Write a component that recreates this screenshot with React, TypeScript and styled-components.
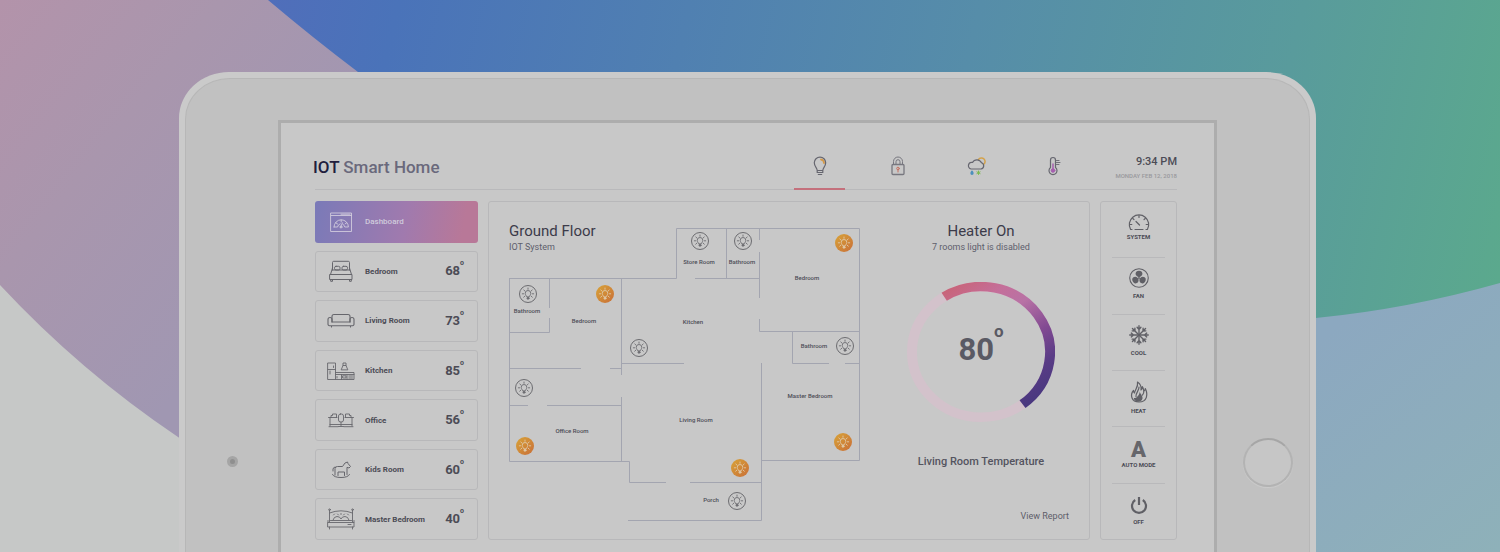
import React from "react";
import styled, { createGlobalStyle, css } from "styled-components";

const GlobalStyle = createGlobalStyle`
  *, *::before, *::after { box-sizing: border-box; }
  body {
    margin: 0;
    background: #c6c8c7;
    color: #4c4c56;
    font-family: Roboto, "Liberation Sans", sans-serif;
  }
  h1, h2, p { margin: 0; }
  button {
    font: inherit;
    color: inherit;
    background: none;
    border: 0;
    padding: 0;
    cursor: pointer;
  }
`;

const Page = styled.div`
  position: relative;
  min-height: 100vh;
  padding: 72px 184px 0 179px;
  display: flex;
  flex-direction: column;
  overflow: hidden;
`;

const Backdrop = styled.svg`
  position: absolute;
  inset: 0;
  width: 100%;
  height: 100%;
`;

const Tablet = styled.div`
  position: relative;
  flex: 1;
  display: flex;
  padding: 6px 6px 0;
  background: #cacaca;
  border-radius: 50px 50px 0 0 / 46px 46px 0 0;
`;

const Bezel = styled.div`
  flex: 1;
  display: grid;
  grid-template-columns: 92px 1fr 92px;
  padding-top: 41px;
  background: #c1c1c1;
  border: solid #b7b7b7;
  border-width: 1px 1px 0;
  border-radius: 45px 45px 0 0 / 41px 41px 0 0;
`;

const BezelSide = styled.div<{ $inset?: number }>`
  display: flex;
  justify-content: center;
  align-items: flex-start;
  padding-left: ${(p) => p.$inset ?? 0}px;
`;

const Camera = styled.span`
  width: 11px;
  height: 11px;
  margin-top: 336px;
  border: 3px solid #a5a5a5;
  border-radius: 50%;
  background: #8f8f8f;
`;

const HomeButton = styled.button`
  width: 50px;
  height: 49px;
  margin-top: 318px;
  border: 2px solid #b3b3b3;
  border-top-color: #a6a6a6;
  border-radius: 50%;
  background: #c6c6c6;
  box-shadow: 0 1px 1px #cccccc;
`;

const Screen = styled.main`
  padding: 32px 37px 12px 34px;
  background: #c8c8c8;
  border: solid #adadad;
  border-width: 3px 3px 0;
`;

const Header = styled.header`
  display: flex;
  height: 35px;
  border-bottom: 1px solid #b9b9bb;
`;

const Title = styled.h1`
  flex: 1;
  margin-left: -2px;
  font-size: 17px;
  line-height: 25px;
  font-weight: 500;
  color: #6a697c;
  strong { font-weight: 500; color: #211d3d; }
`;

const Tabs = styled.nav`
  display: flex;
  gap: 27px;
`;

const Tab = styled.button<{ $active?: boolean }>`
  width: 51px;
  height: 35px;
  padding-bottom: 11px;
  display: flex;
  align-items: center;
  justify-content: center;
  border-bottom: 2px solid ${(p) => (p.$active ? "#c4707c" : "transparent")};
`;

const Clock = styled.div`
  width: 98px;
  text-align: right;
`;

const Time = styled.div`
  font-size: 11px;
  line-height: 14px;
  font-weight: 500;
`;

const DateLine = styled.div`
  font-size: 6px;
  line-height: 14px;
  font-weight: 500;
  color: #98989c;
`;

const Content = styled.div`
  display: grid;
  grid-template-columns: 163px 1fr 77px;
  column-gap: 10px;
  margin-top: 11px;
`;

const box = css`
  border: 1px solid #b8b8ba;
  border-radius: 3px;
`;

const Sidebar = styled.nav`
  display: flex;
  flex-direction: column;
  gap: 8px;
`;

const RoomButton = styled.button<{ $active?: boolean }>`
  ${box}
  flex: 1;
  display: grid;
  grid-template-columns: 28px 1fr auto;
  column-gap: 10px;
  align-items: center;
  padding: 0 13px 0 11px;
  text-align: left;
  font-size: 8px;
  font-weight: 700;
  svg { color: #66666c; }
  ${(p) =>
    p.$active &&
    css`
      border-color: transparent;
      background: linear-gradient(100deg, #7a7ab8, #a07aae 55%, #b87898 90%) border-box;
      color: #d0cbdc;
      font-weight: 500;
      svg { color: #d0cbdc; }
    `}
`;

const RoomTemp = styled.span`
  display: flex;
  align-items: flex-start;
  font-size: 13px;
  line-height: 16px;
  font-weight: 700;
  sup {
    font-size: 7px;
    line-height: 1px;
    vertical-align: baseline;
  }
`;

const Panel = styled.section`
  ${box}
  display: flex;
  gap: 30px;
  min-height: 339px;
  padding: 20px 20px 0 20px;
`;

const FloorArea = styled.div`
  flex: none;
  width: 354px;
  display: grid;
  align-items: start;
  > * { grid-area: 1 / 1; }
`;

const PanelTitle = styled.h2`
  font-size: 15px;
  line-height: 18px;
  font-weight: 400;
  color: #3c3b4a;
`;

const PanelNote = styled.p`
  font-size: 9px;
  line-height: 14px;
  color: #5e5e6c;
`;

const Plan = styled.div`
  position: relative;
  width: 354px;
  height: 294px;
  margin-top: 6px;
`;

const RoomLabel = styled.span<{ $x: number; $y: number }>`
  position: absolute;
  left: ${(p) => p.$x}px;
  top: ${(p) => p.$y}px;
  transform: translate(-50%, -50%);
  font-size: 6px;
  line-height: 8px;
  font-weight: 500;
  white-space: nowrap;
`;

const LightButton = styled.button<{ $x: number; $y: number; $on: boolean }>`
  position: absolute;
  left: ${(p) => p.$x - 9}px;
  top: ${(p) => p.$y - 9}px;
  width: 18px;
  height: 18px;
  display: flex;
  align-items: center;
  justify-content: center;
  border-radius: 50%;
  border: 1px solid ${(p) => (p.$on ? "transparent" : "#6c6c70")};
  color: ${(p) => (p.$on ? "#dfc9a9" : "#6c6c70")};
  background: ${(p) => (p.$on ? "linear-gradient(135deg, #d8a338, #c96f38) border-box" : "none")};
`;

const Heater = styled.div`
  flex: 1;
  display: flex;
  flex-direction: column;
  align-items: center;
`;

const Dial = styled.div`
  display: grid;
  place-items: center;
  margin-top: 28px;
  > * { grid-area: 1 / 1; }
`;

const DialValue = styled.div`
  display: flex;
  padding-bottom: 5px;
  font-size: 31px;
  line-height: 36px;
  font-weight: 700;
  color: #5a5a64;
  sup {
    margin-top: -2px;
    font-size: 17px;
    line-height: 3px;
    vertical-align: baseline;
  }
`;

const DialCaption = styled.p`
  margin-top: 32px;
  font-size: 11px;
  line-height: 16px;
  font-weight: 500;
  color: #54545f;
`;

const ReportLink = styled.a`
  align-self: flex-end;
  margin-top: 40px;
  font-size: 9px;
  line-height: 12px;
  color: #5e5e6a;
  text-decoration: none;
`;

const Modes = styled.aside`
  ${box}
  display: flex;
  flex-direction: column;
  padding: 0 11px;
`;

const ModeButton = styled.button<{ $tight?: boolean }>`
  flex: 1;
  padding-top: 10px;
  display: flex;
  flex-direction: column;
  align-items: center;
  gap: ${(p) => (p.$tight ? 1 : 4)}px;
  font-size: 6px;
  line-height: 8px;
  font-weight: 700;
  white-space: nowrap;
  & + & { border-top: 1px solid #b9b9bb; }
  svg { display: block; color: #606066; }
`;

const AutoGlyph = styled.span`
  height: 20px;
  font-size: 22px;
  line-height: 26px;
  font-weight: 900;
  color: #66666b;
`;

type IconProps = { w: number; h: number; vb?: string; sw?: number; children: React.ReactNode };

const Icon = ({ w, h, vb, sw = 1, children }: IconProps) => (
  <svg
    width={w}
    height={h}
    viewBox={vb ?? `0 0 ${w} ${h}`}
    fill="none"
    stroke="currentColor"
    strokeWidth={sw}
    strokeLinecap="round"
    strokeLinejoin="round"
    aria-hidden="true"
  >
    {children}
  </svg>
);

const DashboardIcon = () => (
  <Icon w={28} h={22} sw={0.9}>
    <path d="M4 2H24.500V20.500H4ZM4 4.500H24.500M14 3.200H23" />
    <path d="M7 16a7 7 0 0 1 14.400 0h-3.600a3.800 3.800 0 0 0-2-2.800M7 16h3.600a3.800 3.800 0 0 1 2.600-3.200M8.800 11.800l1.800 1.200M14.200 9v2M19.600 11.800l-1.500 1.100" />
    <path d="M13.500 16.300l2-4.500" />
    <circle cx="14" cy="16" r="1" />
  </Icon>
);

const BedIcon = () => (
  <Icon w={28} h={22}>
    <path d="M5.500 10V2.500A1.200 1.200 0 0 1 6.700 1.300H21.300A1.200 1.200 0 0 1 22.500 2.500V10M5.500 8L3.500 14.500M22.500 8L24.500 14.500" />
    <path d="M3 14.500H25V19.500H3ZM3.700 19.500V21.300H5.500V19.500M22.500 19.500V21.300H24.300V19.500M5.500 10H22.500" />
    <rect x="7.500" y="6.300" width="5.500" height="3.700" rx="1.500" />
    <rect x="15" y="6.300" width="5.500" height="3.700" rx="1.500" />
  </Icon>
);

const SofaIcon = () => (
  <Icon w={28} h={22} sw={1.100}>
    <path d="M5 8V6.500A2 2 0 0 1 7 4.500H21A2 2 0 0 1 23 6.500V8M5 8.500V12H23V8.500" />
    <path d="M5 12V9.500A2 2 0 0 0 1 9.500V14A1.500 1.500 0 0 0 2.500 15.700H25.500A1.500 1.500 0 0 0 27 14V9.500A2 2 0 0 0 23 9.500V12M4.500 15.700V17M23.500 15.700V17" />
  </Icon>
);

const KitchenIcon = () => (
  <Icon w={28} h={22} sw={0.9}>
    <path d="M1 3H8.500V19.500H1ZM1 9.500H8.500M6.500 6V7.500M3 11V14M8.500 12.500H27V19.500H8.500M8.500 14.500H27M14.500 14.500V19.500M20 14.500V19.500" />
    <path d="M14.300 9.500L16 5.500H19L20.700 9.500ZM16 5.500V3H19V5.500" />
    <rect x="16" y="15.800" width="3" height="2.200" />
    <path d="M21.800 16H25.500M21.800 18H25.500M10 16.500V18" />
  </Icon>
);

const OfficeIcon = () => (
  <Icon w={28} h={22} sw={0.9}>
    <path d="M1.500 8.500H10M18 8.500H26.500M3 8.500V17M25 8.500V17M2 17.700H11M17 17.700H26M3 15.500H25" />
    <path d="M4 8.500V6.500H5.500V5H9.500V8.500M24 8.500V6.500H22.500V5H18.500V8.500" />
    <rect x="11.500" y="5" width="5" height="8" rx="2" />
    <path d="M14 13V17M11.500 17.500H16.500" />
  </Icon>
);

const HorseIcon = () => (
  <Icon w={28} h={22}>
    <path d="M8 16V9.500A2.500 2.500 0 0 1 10.500 7.500H15.500L18 4L20.500 3L21 4.500L23.500 7.500L22 9L20 8.300V15.500M6 12V10A2.500 2.500 0 0 1 8 8" />
    <path d="M11 16.500V13H17.500V16.500" />
    <path d="M5.500 15.500Q7 18.500 14 18.500Q21 18.500 22.500 15.500" />
  </Icon>
);

const MasterBedIcon = () => (
  <Icon w={28} h={22} sw={0.9}>
    <path d="M2.500 14V2.500M25.500 14V2.500M2.500 5Q14 .5 25.500 5" />
    <circle cx="2.500" cy="1.700" r=".8" />
    <circle cx="25.500" cy="1.700" r=".8" />
    <path d="M1 14.500H27V19H1ZM2.500 19V21M25.500 19V21M3.500 12.500H24.500M21 16.500H24M1 12.500V14.500M27 12.500V14.500" />
    <path d="M6 12Q7 8.500 10 8.500Q13 8.500 14 11Q15 8.500 18 8.500Q21 8.500 22 12" />
    <path d="M6.500 7L7.500 6M10.500 6L11.500 7M14 5.500V6.500M16.500 7L17.500 6M20.500 6L21.500 7" />
  </Icon>
);

const BulbIcon = () => (
  <Icon w={16} h={20}>
    <path d="M9 3.500A3.500 3.500 0 0 1 12 7" stroke="#d49a4a" strokeWidth={1.800} />
    <path d="M5.200 14.500C5.200 12 2.300 10.500 2.300 6.800A5.700 5.700 0 0 1 13.700 6.800C13.700 10.500 10.800 12 10.800 14.500ZM5.200 14.500V16.500H10.800V14.500M6.300 18.500H9.700" stroke="#66666f" strokeWidth={1.200} />
  </Icon>
);

const LockIcon = () => (
  <Icon w={16} h={20}>
    <rect x="2" y="8.500" width="12" height="10" rx="1" stroke="#77777f" strokeWidth={1.300} />
    <path d="M3.500 8.500V5.500A4.500 4.500 0 0 1 12.500 5.500V8.500M6 8.500V5.700A2 2 0 0 1 10 5.700V8.500" stroke="#77777f" />
    <circle cx="8" cy="12.500" r="1.300" stroke="#c47060" />
    <path d="M8 14V16" stroke="#c47060" />
  </Icon>
);

const WeatherIcon = () => (
  <Icon w={20} h={20}>
    <path d="M12.500 3.500A3.600 3.600 0 1 1 17.500 8.500" stroke="#d4a24a" strokeWidth={1.500} />
    <path d="M5 13H15A3.200 3.200 0 0 0 15.500 6.800A5 5 0 0 0 6.500 6.500A3.300 3.300 0 1 0 5 13Z" stroke="#66666f" strokeWidth={1.200} />
    <path d="M6 15.500C5 17 5 18 6 18S7 17 6 15.500Z" stroke="#4d90bd" strokeWidth={1.800} />
    <path d="M12.500 15V18.500M10.900 15.900L14.100 17.600M14.100 15.900L10.900 17.600" stroke="#7dba4f" />
  </Icon>
);

const ThermoIcon = () => (
  <Icon w={16} h={20}>
    <path d="M4.500 11.500V4A2.500 2.500 0 0 1 9.500 4V11.500A4 4 0 1 1 4.500 11.500Z" stroke="#66666f" strokeWidth={1.200} />
    <circle cx="7" cy="14.500" r="1.800" fill="#a55fae" stroke="#a55fae" />
    <path d="M7 8V13" stroke="#a55fae" strokeWidth={1.500} />
    <path d="M10.500 4.500H13M10.500 6.500H14M10.500 8.500H13" stroke="#66666f" strokeWidth={0.9} />
  </Icon>
);

const LightIcon = () => (
  <Icon w={14} h={14} sw={0.9}>
    <path d="M5.700 9.500C5.500 8.700 4.200 8 4.200 6.300A2.800 2.800 0 0 1 9.800 6.300C9.800 8 8.500 8.700 8.300 9.500Z" />
    <path d="M7 1V2.300M2.800 3L3.800 3.900M11.200 3L10.200 3.900M1.300 6.800H2.600M12.700 6.800H11.400M2.700 10.200L3.800 9.200M11.300 10.200L10.200 9.200" />
    <circle cx="7" cy="11.300" r="1" fill="currentColor" />
  </Icon>
);

const GaugeIcon = () => (
  <Icon w={22} h={20} sw={1.200}>
    <path d="M4 17.500H2.600A9.700 9.700 0 1 1 19.400 17.500H18M7 17.500H15" />
    <path d="M11 3.500V5.500M4.800 6.500L6 7.700M17.200 6.500L16 7.700M1.800 12.500H3.800M20.200 12.500H18.200M8 9.500L11.500 13" />
  </Icon>
);

const FanIcon = () => (
  <Icon w={22} h={20} vb="0 0 22 22" sw={1.200}>
    <circle cx="11" cy="11" r="10.200" />
    <g fill="currentColor" stroke="none">
      <path id="blade" d="M10.300 9.900C7.300 9 6.500 6 8 4.200C9.500 2.800 12.500 2.800 14 4.200C15.500 6 14.700 9 11.700 9.900Z" />
      <use href="#blade" transform="rotate(120 11 11)" />
      <use href="#blade" transform="rotate(240 11 11)" />
      <circle cx="11" cy="11" r="1" />
    </g>
  </Icon>
);

const SnowIcon = () => (
  <Icon w={22} h={20} vb="0 0 22 22" sw={1.500}>
    {[0, 45, 90, 135, 180, 225, 270, 315].map((a) => (
      <path key={a} d="M11 11V.8M8.900 2.500L11 4.900L13.100 2.500" transform={`rotate(${a} 11 11)`} />
    ))}
  </Icon>
);

const FlameIcon = () => (
  <Icon w={20} h={22} vb="0 0 20 22" sw={1.200}>
    <path d="M8.500 1C12 3.500 12.500 6.500 12 9C13 8.500 13.500 7 13.300 5.500C14.500 7 14.800 8.500 14.800 10C16 9.500 16.300 8.500 16.300 7.500C19 13 18.500 21 10 21C2 21 1 13.500 4.500 9.500C4.500 10.500 4.800 11.500 5.500 12C6 8.500 9.500 6 8.500 1Z" />
    <path d="M10 6C10.300 9.500 6.500 12 7 15.500M14.800 10C15 12 14.500 13 13.500 14" />
    <path d="M10.800 10.500C11 13 14 14.500 13.500 17.500C13 20 11 20.700 9 20.700C6.500 20.500 5 19 4.800 17C6 17.300 7 17 7.700 16.300C9.500 14.800 10.500 13 10.800 10.500Z" fill="currentColor" stroke="none" />
  </Icon>
);

const PowerIcon = () => (
  <Icon w={20} h={20} vb="0 -2 20 20" sw={2.200}>
    <path d="M6.200 4A7 7 0 1 0 13.800 4M10 1V9" strokeLinecap="butt" />
  </Icon>
);

const rooms = [
  { name: "Bedroom", temp: 68, icon: <BedIcon /> },
  { name: "Living Room", temp: 73, icon: <SofaIcon /> },
  { name: "Kitchen", temp: 85, icon: <KitchenIcon /> },
  { name: "Office", temp: 56, icon: <OfficeIcon /> },
  { name: "Kids Room", temp: 60, icon: <HorseIcon /> },
  { name: "Master Bedroom", temp: 40, icon: <MasterBedIcon /> },
];

const tabs = [
  { name: "Lights", icon: <BulbIcon /> },
  { name: "Security", icon: <LockIcon /> },
  { name: "Weather", icon: <WeatherIcon /> },
  { name: "Temperature", icon: <ThermoIcon /> },
];

const modes = [
  { name: "SYSTEM", icon: <GaugeIcon />, tight: true },
  { name: "FAN", icon: <FanIcon /> },
  { name: "COOL", icon: <SnowIcon /> },
  { name: "HEAT", icon: <FlameIcon /> },
  { name: "AUTO MODE", icon: <AutoGlyph aria-hidden="true">A</AutoGlyph> },
  { name: "OFF", icon: <PowerIcon /> },
];

const planLabels = [
  { name: "Store Room", x: 190, y: 34 },
  { name: "Bathroom", x: 233, y: 34 },
  { name: "Bedroom", x: 298, y: 50 },
  { name: "Bathroom", x: 18, y: 83 },
  { name: "Bedroom", x: 75, y: 93 },
  { name: "Kitchen", x: 184, y: 94 },
  { name: "Bathroom", x: 305, y: 118 },
  { name: "Master Bedroom", x: 301, y: 168 },
  { name: "Living Room", x: 187, y: 192 },
  { name: "Office Room", x: 63, y: 203 },
  { name: "Porch", x: 202, y: 272 },
];

const lights = [
  { room: "Store room", x: 191, y: 13, on: false },
  { room: "Small bathroom", x: 234, y: 13, on: false },
  { room: "Upper bedroom", x: 335, y: 15, on: true },
  { room: "Left bathroom", x: 19, y: 66, on: false },
  { room: "Left bedroom", x: 96, y: 66, on: true },
  { room: "Kitchen", x: 130, y: 120, on: false },
  { room: "Right bathroom", x: 336, y: 118, on: false },
  { room: "Hall", x: 15, y: 160, on: false },
  { room: "Office", x: 16, y: 218, on: true },
  { room: "Master bedroom", x: 334, y: 214, on: true },
  { room: "Living room", x: 231, y: 240, on: true },
  { room: "Porch", x: 228, y: 273, on: false },
];

const FloorPlan = () => (
  <Plan>
    <svg width="354" height="294" fill="none" stroke="#a3a5b0" aria-hidden="true">
      <path d="M.5 50.500H167.500V.5H350.500V232.500H252M.5 50V233.500H120.500V254.500H157M181 254.500H252M252.500 135V292.500H119" />
      <path d="M40.500 50V80M40.500 90V104.500H.5M112.500 50V147M112.500 169V233M.5 140.500H72M101 140.500H112M112 135.500H175M.5 177.500H19M38 177.500H112" />
      <path d="M217.500 0V50M186 50.500H250M250.500 0V12M250.500 24V70M250.500 91V103.500H350M283.500 103V135.500H320M336 135.500H350" />
    </svg>
    {planLabels.map((l) => (
      <RoomLabel key={`${l.x}-${l.y}`} $x={l.x} $y={l.y}>
        {l.name}
      </RoomLabel>
    ))}
    {lights.map((l) => (
      <LightButton key={l.room} $x={l.x} $y={l.y} $on={l.on} aria-label={`${l.room} light`} aria-pressed={l.on}>
        <LightIcon />
      </LightButton>
    ))}
  </Plan>
);

const TemperatureDial = () => (
  <Dial>
    <svg width="148" height="140" viewBox="-74 -74 148 148" preserveAspectRatio="none" fill="none" strokeWidth="10" aria-hidden="true">
      <defs>
        <linearGradient id="heat" gradientUnits="userSpaceOnUse" x1="-39" y1="-62" x2="44" y2="59">
          <stop offset="0" stopColor="#c8647a" />
          <stop offset=".2" stopColor="#c46f9a" />
          <stop offset=".36" stopColor="#b872a5" />
          <stop offset=".6" stopColor="#824a92" />
          <stop offset=".8" stopColor="#5a3c86" />
          <stop offset="1" stopColor="#49387f" />
        </linearGradient>
      </defs>
      <circle r="69" stroke="#d3c2cb" />
      <path d="M-36.800 -58.400A69 69 0 0 1 41.500 55.100" stroke="url(#heat)" />
    </svg>
    <DialValue>
      80<sup>o</sup>
    </DialValue>
  </Dial>
);

const BackdropArt = () => (
  <Backdrop viewBox="0 0 1500 552" preserveAspectRatio="xMidYMin slice" aria-hidden="true">
    <defs>
      <linearGradient id="rose" gradientUnits="userSpaceOnUse" x1="0" y1="0" x2="300" y2="240">
        <stop offset="0" stopColor="#b393aa" />
        <stop offset=".45" stopColor="#a996ad" />
        <stop offset="1" stopColor="#a097b2" />
      </linearGradient>
      <linearGradient id="sea" gradientUnits="userSpaceOnUse" x1="270" y1="0" x2="1500" y2="280">
        <stop offset="0" stopColor="#506eba" />
        <stop offset=".1" stopColor="#4a73b9" />
        <stop offset=".55" stopColor="#568da9" />
        <stop offset=".8" stopColor="#599b9c" />
        <stop offset="1" stopColor="#5ba98d" />
      </linearGradient>
      <linearGradient id="mist" gradientUnits="userSpaceOnUse" x1="1320" y1="340" x2="1500" y2="552">
        <stop offset="0" stopColor="#8ca8c0" />
        <stop offset="1" stopColor="#8eb1b9" />
      </linearGradient>
    </defs>
    <path d="M0 0H600V552H400Q280 510 178 437Q80 371 0 285Z" fill="url(#rose)" />
    <path d="M1200 200H1500V552H1200Z" fill="url(#mist)" />
    <path d="M268 0Q313 38 358 72C600 260 1000 350 1316 318Q1408 309 1500 283V0Z" fill="url(#sea)" />
  </Backdrop>
);

export default function App() {
  return (
    <>
      <GlobalStyle />
      <Page>
        <BackdropArt />
        <Tablet>
          <Bezel>
            <BezelSide>
              <Camera />
            </BezelSide>
            <Screen>
              <Header>
                <Title>
                  <strong>IOT</strong> Smart Home
                </Title>
                <Tabs aria-label="Systems">
                  {tabs.map((t, i) => (
                    <Tab key={t.name} $active={i === 0} aria-label={t.name}>
                      {t.icon}
                    </Tab>
                  ))}
                </Tabs>
                <Clock>
                  <Time>9:34 PM</Time>
                  <DateLine>MONDAY FEB 12, 2018</DateLine>
                </Clock>
              </Header>
              <Content>
                <Sidebar aria-label="Rooms">
                  <RoomButton $active>
                    <DashboardIcon />
                    Dashboard
                  </RoomButton>
                  {rooms.map((r) => (
                    <RoomButton key={r.name}>
                      {r.icon}
                      {r.name}
                      <RoomTemp>
                        {r.temp}
                        <sup>o</sup>
                      </RoomTemp>
                    </RoomButton>
                  ))}
                </Sidebar>
                <Panel>
                  <FloorArea>
                    <div>
                      <PanelTitle>Ground Floor</PanelTitle>
                      <PanelNote>IOT System</PanelNote>
                    </div>
                    <FloorPlan />
                  </FloorArea>
                  <Heater>
                    <PanelTitle>Heater On</PanelTitle>
                    <PanelNote>7 rooms light is disabled</PanelNote>
                    <TemperatureDial />
                    <DialCaption>Living Room Temperature</DialCaption>
                    <ReportLink href="#report">View Report</ReportLink>
                  </Heater>
                </Panel>
                <Modes aria-label="Climate modes">
                  {modes.map((m) => (
                    <ModeButton key={m.name} $tight={m.tight}>
                      {m.icon}
                      {m.name}
                    </ModeButton>
                  ))}
                </Modes>
              </Content>
            </Screen>
            <BezelSide $inset={10}>
              <HomeButton aria-label="Home" />
            </BezelSide>
          </Bezel>
        </Tablet>
      </Page>
    </>
  );
}
